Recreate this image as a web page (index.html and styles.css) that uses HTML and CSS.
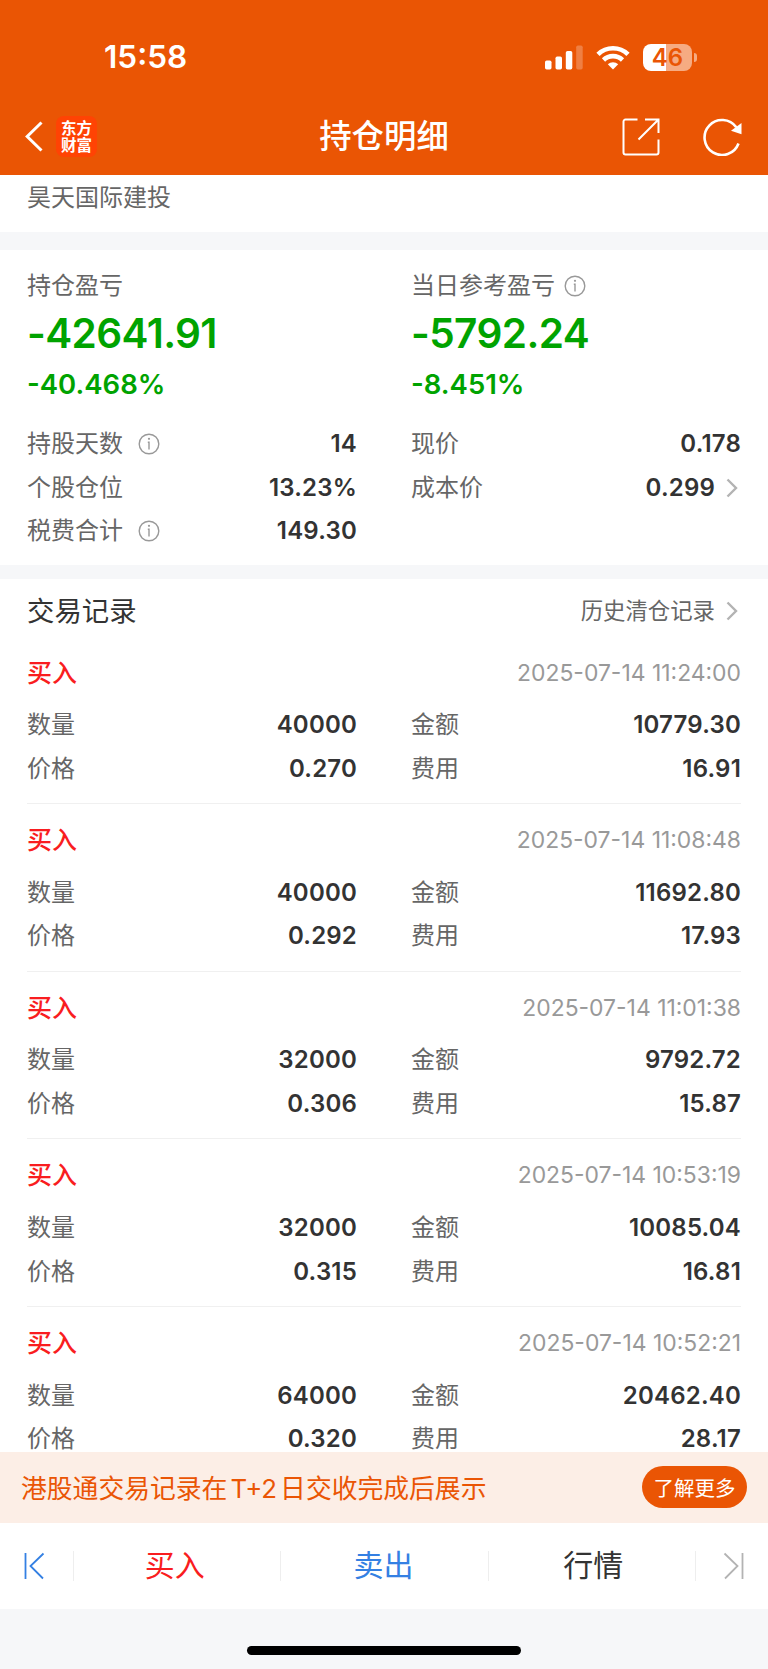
FILE: index.html
```
<!DOCTYPE html>
<html lang="zh-CN">
<head>
  <meta charset="UTF-8" />
  <meta name="viewport" content="width=device-width, initial-scale=1.0"/>
  <title>持仓明细</title>
  <link rel="stylesheet" href="styles.css">
</head>
<body>

<!-- shared icons -->
<svg class="sprite">
  <symbol id="info" viewBox="0 0 22 22">
    <circle cx="11" cy="11" r="9.8" fill="none" stroke="#999" stroke-width="1.4"/>
    <circle cx="11" cy="5.8" r="1.1" fill="#999"/>
    <path d="M9.8 9.2H11v7.300" fill="none" stroke="#999" stroke-width="1.4"/>
  </symbol>
  <symbol id="arrow" viewBox="0 0 12 20">
    <path d="M1.5 1.5L10 10l-8.500 8.500" fill="none" stroke="#b3b3b3" stroke-width="2.4"/>
  </symbol>
</svg>

<header>
  <div class="status">
    <span class="time">15:58</span>
    <div class="signals">
      <svg width="38" height="25" viewBox="0 0 38 25">
        <g fill="#fff">
          <rect x="0" y="15.5" width="6.5" height="9" rx="1.7"/>
          <rect x="10.5" y="11.5" width="6.5" height="13" rx="1.7"/>
          <rect x="20.8" y="6" width="6.5" height="18.5" rx="1.7"/>
          <rect x="31.2" y="0.5" width="6.5" height="24" rx="1.7" opacity=".25"/>
        </g>
      </svg>
      <svg class="wifi" width="34" height="25" viewBox="0 0 34 25">
        <g fill="none" stroke="#fff" stroke-width="4.6">
          <path d="M2 9.3a21.5 21.5 0 0 1 30 0"/>
          <path d="M7.5 15a13.5 13.5 0 0 1 19 0"/>
        </g>
        <path d="M17 24.5l-5.200-5.200a7.500 7.500 0 0 1 10.400 0z" fill="#fff"/>
      </svg>
      <div class="battery"><span>46</span></div>
      <i class="battery-cap"></i>
    </div>
  </div>
  <div class="navbar">
    <div class="nav-side">
      <svg width="18" height="31" viewBox="0 0 18 31"><path d="M16.5 1.5L2.2 15.5l14.300 14" fill="none" stroke="#fff" stroke-width="3"/></svg>
      <div class="logo">东方<br>财富</div>
    </div>
    <h1>持仓明细</h1>
    <div class="nav-side right">
      <svg width="38" height="38" viewBox="0 0 38 38">
        <g fill="none" stroke="#fff" stroke-width="2">
          <path d="M15.5 1.5H3.5a2 2 0 0 0-2 2v31a2 2 0 0 0 2 2h31a2 2 0 0 0 2-2V21.5"/>
          <path d="M23 1.5h13.500V15M36 2L16.5 21.5"/>
        </g>
      </svg>
      <svg width="40" height="38" viewBox="0 0 40 38">
        <path d="M35.5 25.5A17.5 17.5 0 1 1 33.3 9.3" fill="none" stroke="#fff" stroke-width="2.6"/>
        <path d="M38.5 5v11.200l-10.500-3.400z" fill="#fff"/>
      </svg>
    </div>
  </div>
</header>

<main>
  <section class="stock">昊天国际建投</section>

  <section class="summary">
    <div class="col">
      <div class="label">持仓盈亏</div>
      <div class="profit">-42641.91</div>
      <div class="percent">-40.468%</div>
      <div class="row"><span>持股天数<svg class="info gap"><use href="#info"/></svg></span><b>14</b></div>
      <div class="row"><span>个股仓位</span><b>13.23%</b></div>
      <div class="row"><span>税费合计<svg class="info gap"><use href="#info"/></svg></span><b>149.30</b></div>
    </div>
    <div class="col">
      <div class="label">当日参考盈亏<svg class="info"><use href="#info"/></svg></div>
      <div class="profit">-5792.24</div>
      <div class="percent">-8.451%</div>
      <div class="row"><span>现价</span><b>0.178</b></div>
      <div class="row"><span>成本价</span><b>0.299<svg class="arrow"><use href="#arrow"/></svg></b></div>
    </div>
  </section>

  <section class="trades">
    <div class="trades-head">
      <h2>交易记录</h2>
      <a>历史清仓记录<svg class="arrow"><use href="#arrow"/></svg></a>
    </div>
    <div id="tradeList"></div>
  </section>
</main>

<div class="notice">
  <span>港股通交易记录在<i>T+2</i>日交收完成后展示</span>
  <button>了解更多</button>
</div>

<nav>
  <a class="edge first"><svg width="21" height="28" viewBox="0 0 21 28"><path d="M1.5 1v26M19.5 1.5L6.5 14l12.500 12.500" fill="none" stroke="#3480e3" stroke-width="1.8"/></svg></a>
  <a class="buy">买入</a>
  <a class="sell">卖出</a>
  <a class="quote">行情</a>
  <a class="edge last"><svg width="21" height="28" viewBox="0 0 21 28"><path d="M19.5 1v26M1.5 1.5L14.5 14 2 26.5" fill="none" stroke="#b3b3b3" stroke-width="1.8"/></svg></a>
</nav>
<footer><div class="home-bar"></div></footer>

<script>
  const trades = [
    { time: "2025-07-14 11:24:00", qty: "40000", amount: "10779.30", price: "0.270", fee: "16.91" },
    { time: "2025-07-14 11:08:48", qty: "40000", amount: "11692.80", price: "0.292", fee: "17.93" },
    { time: "2025-07-14 11:01:38", qty: "32000", amount: "9792.72", price: "0.306", fee: "15.87" },
    { time: "2025-07-14 10:53:19", qty: "32000", amount: "10085.04", price: "0.315", fee: "16.81" },
    { time: "2025-07-14 10:52:21", qty: "64000", amount: "20462.40", price: "0.320", fee: "28.17" }
  ];

  document.getElementById("tradeList").innerHTML = trades.map(t => `
    <div class="trade">
      <div class="trade-top"><strong>买入</strong><time>${t.time}</time></div>
      <div class="trade-grid">
        <div class="row"><span>数量</span><b>${t.qty}</b></div>
        <div class="row"><span>金额</span><b>${t.amount}</b></div>
        <div class="row"><span>价格</span><b>${t.price}</b></div>
        <div class="row"><span>费用</span><b>${t.fee}</b></div>
      </div>
    </div>`).join("");
</script>
</body>
</html>
```
FILE: styles.css
```
* { margin: 0; padding: 0; box-sizing: border-box; }
body {
  font-family: Inter, 'Noto Sans CJK SC', sans-serif; background: #fff; color: #333;
  width: 768px; height: 1669px; overflow: hidden; display: flex; flex-direction: column;
}
.sprite { display: none; }
svg { flex: none; }

header { background: #ea5504; color: #fff; height: 175px; flex: none; }
.status { height: 98px; padding: 16px 71px 0 104px; display: flex; justify-content: space-between; align-items: center; }
.time { font-size: 31.5px; font-weight: 600; line-height: 40px; }
.signals { display: flex; align-items: center; }
.wifi { margin-left: 13px; }
.battery {
  width: 49px; height: 27px; margin-left: 13px; border-radius: 8px; text-align: center;
  background: linear-gradient(90deg, #fff 46%, #f6ab82 46%);
  color: #ea5504; font-size: 24px; font-weight: 600; line-height: 27px;
}
.battery-cap { width: 3px; height: 9px; margin-left: 2px; background: #f6ab82; border-radius: 0 4px 4px 0; }

.navbar { height: 77px; padding: 0 25px; display: flex; justify-content: space-between; align-items: center; }
.nav-side { width: 130px; display: flex; align-items: center; gap: 13px; }
.nav-side.right { justify-content: flex-end; gap: 43px; }
.logo {
  width: 41px; height: 41px; border-radius: 8px; background: #ff4304; text-align: center;
  font: 700 15.5px/17.5px 'Noto Sans CJK SC', sans-serif; padding-top: 2.5px;
}
h1 { font-size: 32.4px; font-weight: 500; line-height: 40px; padding-top: 1px; }

main { flex: 1; min-height: 0; overflow: hidden; }
.stock { height: 57px; padding: 5px 27px 0; font-size: 24px; line-height: 36px; color: #666; }
.summary { height: 347px; border: solid #f6f7f9; border-width: 18px 0 14px; padding: 18px 27px 0; display: grid; grid-template-columns: 330px 330px; gap: 54px; }
.label { height: 36px; display: flex; align-items: center; gap: 9px; font-size: 24px; line-height: 36px; color: #666; }
.profit { font-size: 40.5px; font-weight: 600; line-height: 60px; letter-spacing: -0.6px; color: #00a300; }
.percent { font-size: 27.5px; font-weight: 600; line-height: 41px; margin-bottom: 17.5px; color: #00a300; }
.row { height: 43.6px; display: flex; justify-content: space-between; align-items: center; font-size: 24px; line-height: 26px; }
.row span { display: flex; align-items: center; color: #666; }
.row b { display: flex; align-items: center; font-weight: 600; letter-spacing: 0.2px; }
.info { width: 22px; height: 22px; }
.info.gap { margin-left: 15px; }
.arrow { width: 12px; height: 20px; margin: 0 3px 0 11px; }

.trades { padding: 0 27px; }
.trades-head { height: 57.5px; padding-top: 7px; display: flex; justify-content: space-between; align-items: center; }
h2 { font-size: 27.4px; font-weight: 400; line-height: 40px; }
.trades-head a { display: flex; align-items: center; font-size: 22.4px; line-height: 32px; color: #666; }
.trade { height: 167.6px; padding-top: 18px; border-bottom: 1px solid #f0f0f0; }
.trade-top { height: 36px; margin-bottom: 13px; display: flex; justify-content: space-between; align-items: center; }
.trade-top strong { font-size: 25px; font-weight: 500; line-height: 36px; color: #f91d20; }
.trade-top time { font-size: 22.9px; color: #999; }
.trade-grid { display: grid; grid-template-columns: 330px 330px; column-gap: 54px; }

.notice { height: 70.5px; flex: none; padding: 0 21px; background: #fceee6; display: flex; justify-content: space-between; align-items: center; color: #ea5504; font-size: 25.8px; }
.notice span { padding-bottom: 2px; }
.notice i { font-style: normal; margin: 0 3px; }
.notice button { width: 105px; height: 42px; border: none; border-radius: 21px; background: #ea5504; color: #fff; font: 20.5px/41px 'Noto Sans CJK SC', sans-serif; }

nav { height: 86.5px; flex: none; display: flex; align-items: center; background: #fff; }
nav a { flex: 1; height: 30px; line-height: 29px; text-align: center; font-size: 30px; }
nav a + a { border-left: 1px solid #eee; }
nav a.edge { flex: 0 0 73px; display: flex; align-items: center; justify-content: center; }
nav a.first { padding-right: 5px; }
nav a.last { padding-left: 4px; }
nav .buy { color: #f91d20; text-indent: -5px; }
nav .sell { color: #3480e3; text-indent: -2px; }
nav .quote { text-indent: 3px; }
footer { height: 60px; flex: none; background: #f6f7f9; padding-top: 37px; }
.home-bar { width: 274px; height: 9px; margin: 0 auto; border-radius: 5px; background: #000; }
```
